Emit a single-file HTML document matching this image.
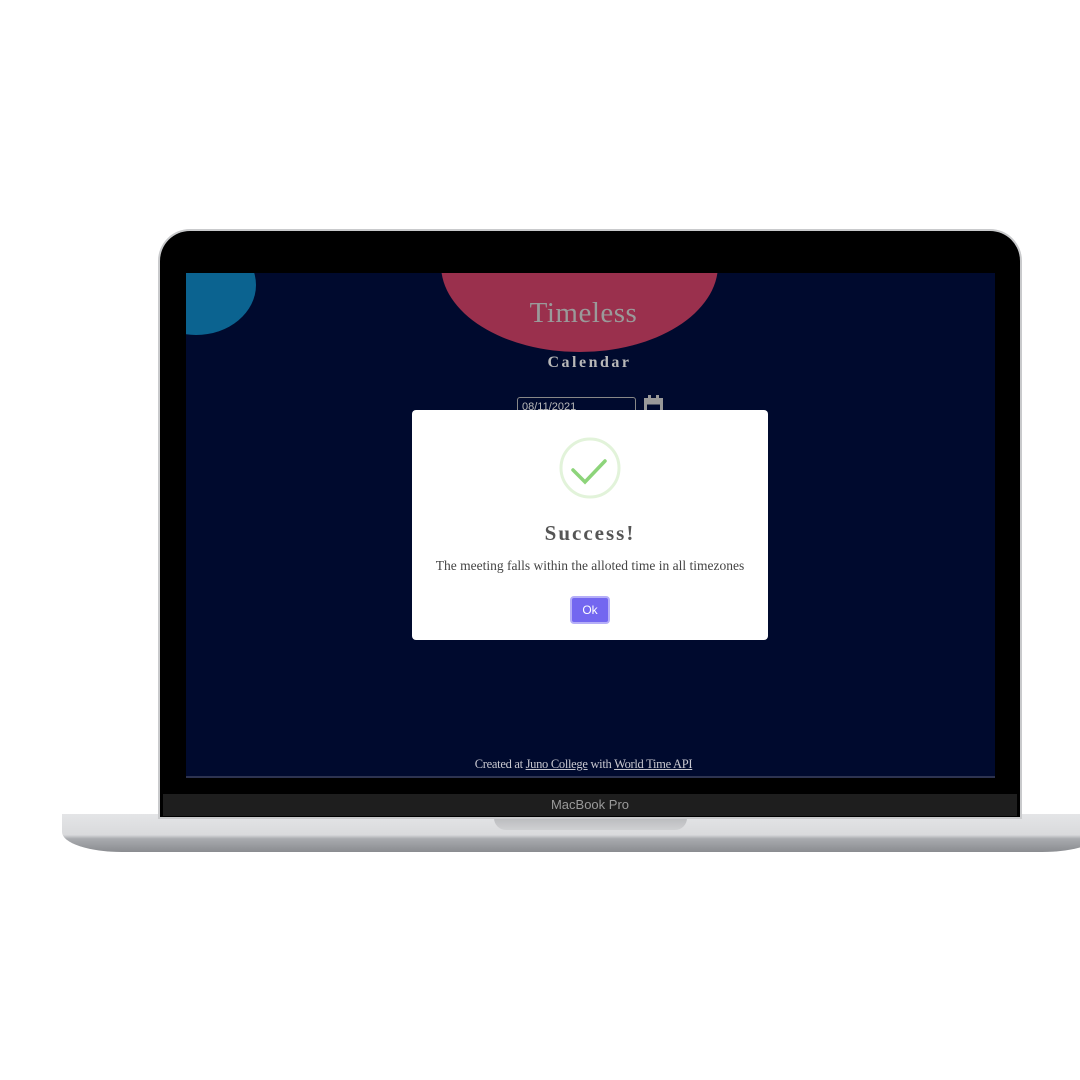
<!DOCTYPE html>
<html><head><style>
*{margin:0;padding:0;box-sizing:border-box}
body{width:1080px;height:1080px;background:#fff;position:relative;overflow:hidden;font-family:"Liberation Serif",serif}
.a{position:absolute}
</style></head><body>
<!-- base -->
<div class="a" style="left:62px;top:814px;width:1040px;height:38px;border-radius:0 0 60px 60px/0 0 20px 20px;background:linear-gradient(#e4e5e7 0,#d9dadc 55%,#a9abaf 65%,#8a8c90 100%)"></div>
<div class="a" style="left:494px;top:816px;width:193px;height:14px;border-radius:0 0 12px 12px;background:linear-gradient(#b7b8bb,#cfd0d2)"></div>
<!-- lid -->
<div class="a" style="left:158px;top:229px;width:864px;height:590px;border-radius:32px 32px 0 0;background:#c9cacc"></div>
<div class="a" style="left:160px;top:231px;width:860px;height:586px;border-radius:30px 30px 0 0;background:#000"></div>
<div class="a" style="left:163px;top:794px;width:854px;height:22px;background:#1e1e1e;color:#9a9a9a;font-family:'Liberation Sans',sans-serif;font-size:13px;text-align:center;line-height:22px">MacBook Pro</div>
<!-- screen -->
<div class="a" style="left:186px;top:273px;width:809px;height:505px;background:#000a2e;overflow:hidden">
  <div class="a" style="left:-50px;top:-38px;width:120px;height:100px;border-radius:50%;background:#0b6390"></div>
  <div class="a" style="left:255px;top:-95px;width:277px;height:174px;border-radius:50%;background:#9a304d"></div>
  <div class="a" style="left:0;top:24px;width:795px;text-align:center;font-size:29px;color:#9a9a9a;letter-spacing:0.5px">Timeless</div>
  <div class="a" style="left:0;top:81px;width:807px;text-align:center;font-size:16px;font-weight:bold;color:#b8b8b8;letter-spacing:2.5px">Calendar</div>
  <div class="a" style="left:331px;top:124px;width:119px;height:22px;border:1px solid #888;border-radius:3px;color:#bbb;font-family:'Liberation Sans',sans-serif;font-size:11px;padding:3px 4px">08/11/2021</div>
  <svg class="a" style="left:458px;top:122px" width="19" height="22" viewBox="0 0 19 22"><rect x="4" y="0" width="3" height="4" fill="#999"/><rect x="12" y="0" width="3" height="4" fill="#999"/><rect x="0" y="3" width="19" height="5" fill="#999"/><rect x="1.5" y="8" width="16" height="12" fill="none" stroke="#999" stroke-width="3"/></svg>
  <div class="a" style="left:-7px;top:484px;width:809px;text-align:center;font-size:12.5px;color:#c8c8d0;letter-spacing:-0.3px">Created at <u>Juno College</u> with <u>World Time API</u></div>
  <div class="a" style="left:0;top:503px;width:809px;height:2px;background:#2d3350"></div>
</div>
<!-- modal -->
<div class="a" style="left:412px;top:410px;width:356px;height:230px;background:#fff;border-radius:4px">
  <svg class="a" style="left:147px;top:27px" width="62" height="62" viewBox="0 0 62 62"><circle cx="31" cy="31" r="29" fill="none" stroke="#e2f3da" stroke-width="3"/><path d="M14 33 L26 45 L46 24" fill="none" stroke="#8dd47a" stroke-width="3.5" stroke-linecap="round"/></svg>
  <div class="a" style="left:0;top:111px;width:356px;text-align:center;font-size:21px;font-weight:bold;color:#555;letter-spacing:2px">Success!</div>
  <div class="a" style="left:0;top:148px;width:356px;text-align:center;font-size:13.5px;color:#444">The meeting falls within the alloted time in all timezones</div>
  <div class="a" style="left:158px;top:186px;width:40px;height:28px;background:#7367f0;border:2px solid #b5aef8;border-radius:4px;color:#fff;font-family:'Liberation Sans',sans-serif;font-size:12px;text-align:center;line-height:24px">Ok</div>
</div>
</body></html>
